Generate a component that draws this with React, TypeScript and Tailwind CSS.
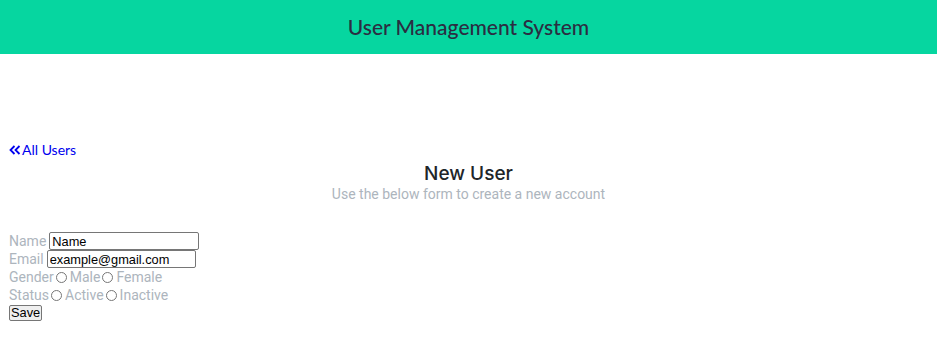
import React from "react";

export default function App() {
  const labelCls = "text-[#adb5bd]";
  const inputCls =
    "h-[18px] border border-[#767676] rounded-[2px] px-[2px] py-0 text-[12.8px] leading-[14px] text-black bg-white";
  const arial = { fontFamily: "Arial, 'Liberation Sans', sans-serif" };
  const radioCls = "w-[11px] h-[11px] ml-[2px] mr-[3px]";
  return (
    <div className="min-h-[360px] bg-white" style={{ fontFamily: "Roboto, sans-serif" }}>
      <header className="h-[54px] bg-[#06d6a0] flex items-center justify-center">
        <h1
          className="text-[21px] font-medium text-[#2b2d42]"
          style={{ fontFamily: "Lato, sans-serif" }}
        >
          User Management System
        </h1>
      </header>

      <div className="pt-[88px] px-[9px]">
        <a
          href="#"
          className="flex items-center text-[14px] text-[#0000ee] leading-[16px]"
          style={{ fontFamily: "Lato, sans-serif" }}
        >
          <svg width="12" height="10" viewBox="0 0 12 10" className="mr-[1px]">
            <path d="M5.5 1 L1.5 5 L5.5 9 M10.5 1 L6.5 5 L10.5 9" fill="none" stroke="#0000ee" strokeWidth="1.8" />
          </svg>
          All Users
        </a>

        <div className="flex flex-col items-center mt-[4px]">
          <h2
            className="text-[19px] leading-[24px] font-medium text-[#212529]"
            style={{ fontFamily: "Inter, sans-serif" }}
          >
            New User
          </h2>
          <p className="text-[14px] leading-[16px] text-[#adb5bd]">
            Use the below form to create a new account
          </p>
        </div>

        <form className="mt-[30px] text-[14px] leading-[18px]">
          <div className="flex items-center gap-[3px] h-[18px]">
            <span className={labelCls}>Name</span>
            <input className={`${inputCls} w-[150px]`} defaultValue="Name" style={arial} />
          </div>
          <div className="flex items-center gap-[3px] h-[18px]">
            <span className={labelCls}>Email</span>
            <input className={`${inputCls} w-[149px]`} defaultValue="example@gmail.com" style={arial} />
          </div>
          <div className={`flex items-center h-[18px] ${labelCls}`}>
            <span>Gender</span>
            <input type="radio" name="g" className={radioCls} />
            <span>Male</span>
            <input type="radio" name="g" className={radioCls} />
            <span>Female</span>
          </div>
          <div className={`flex items-center h-[18px] ${labelCls}`}>
            <span>Status</span>
            <input type="radio" name="s" className={radioCls} />
            <span>Active</span>
            <input type="radio" name="s" className={radioCls} />
            <span>Inactive</span>
          </div>
          <button
            type="button"
            className="block mt-[1px] h-[16px] border border-[#767676] rounded-[2px] bg-[#efefef] px-[1px] py-0 text-[12.8px] text-black leading-[14px]"
            style={arial}
          >
            Save
          </button>
        </form>
      </div>
    </div>
  );
}
